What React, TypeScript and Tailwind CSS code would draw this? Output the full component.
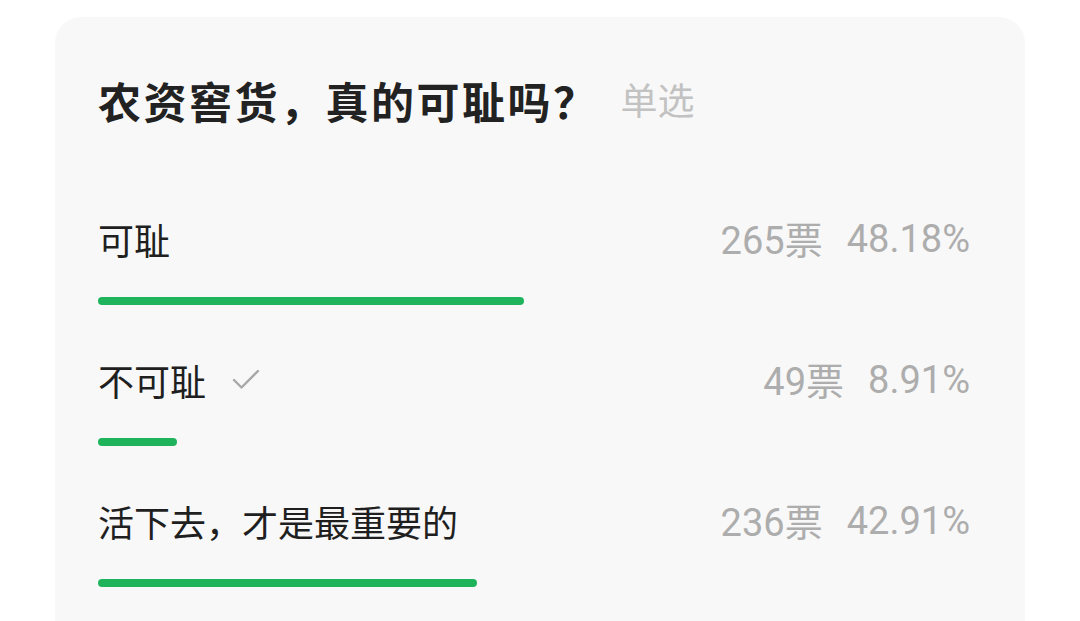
import { Check } from "lucide-react";

const OPTIONS = [
  { label: "可耻", votes: 265, pct: 48.18, mine: false },
  { label: "不可耻", votes: 49, pct: 8.91, mine: true },
  { label: "活下去，才是最重要的", votes: 236, pct: 42.91, mine: false },
];

const CJK = "font-['Noto_Sans_CJK_SC','Noto_Sans',sans-serif]";

function App() {
  return (
    <div className={`h-screen overflow-hidden bg-white px-[55px] pt-[17px] ${CJK}`}>
      <div className="rounded-[26px] bg-[#f8f8f8] px-[43px] pt-[53px] pb-[60px]">
        <div className="flex items-center h-[60px]">
          <span className="text-[43px] font-bold text-[#222] tracking-[2.5px]">
            农资窖货，真的可耻吗？
          </span>
          <span className="ml-[22px] text-[37px] text-[#c2c2c2]">单选</span>
        </div>

        <div className="mt-[84px] flex flex-col gap-[50px]">
          {OPTIONS.map((o) => (
            <div key={o.label}>
              <div className="flex items-center justify-between h-[50px]">
                <div className="flex items-center">
                  <span className="text-[36px] text-[#1f1f1f]">{o.label}</span>
                  {o.mine && (
                    <Check className="ml-[22px] w-[36px] h-[36px] text-[#a8a8a8]" strokeWidth={1.6} />
                  )}
                </div>
                <div className="mr-[12px] flex items-center gap-[24px] text-[38px] text-[#adadad] font-['Roboto','Noto_Sans_CJK_SC',sans-serif]">
                  <span>
                    {o.votes}
                    <span className={CJK}>票</span>
                  </span>
                  <span>{o.pct.toFixed(2)}%</span>
                </div>
              </div>
              <div className="mt-[33px] h-[8px]">
                <div
                  className="h-full rounded-full bg-[#1fb35b]"
                  style={{ width: `${o.pct}%` }}
                />
              </div>
            </div>
          ))}
        </div>
      </div>
    </div>
  );
}

export default App;
